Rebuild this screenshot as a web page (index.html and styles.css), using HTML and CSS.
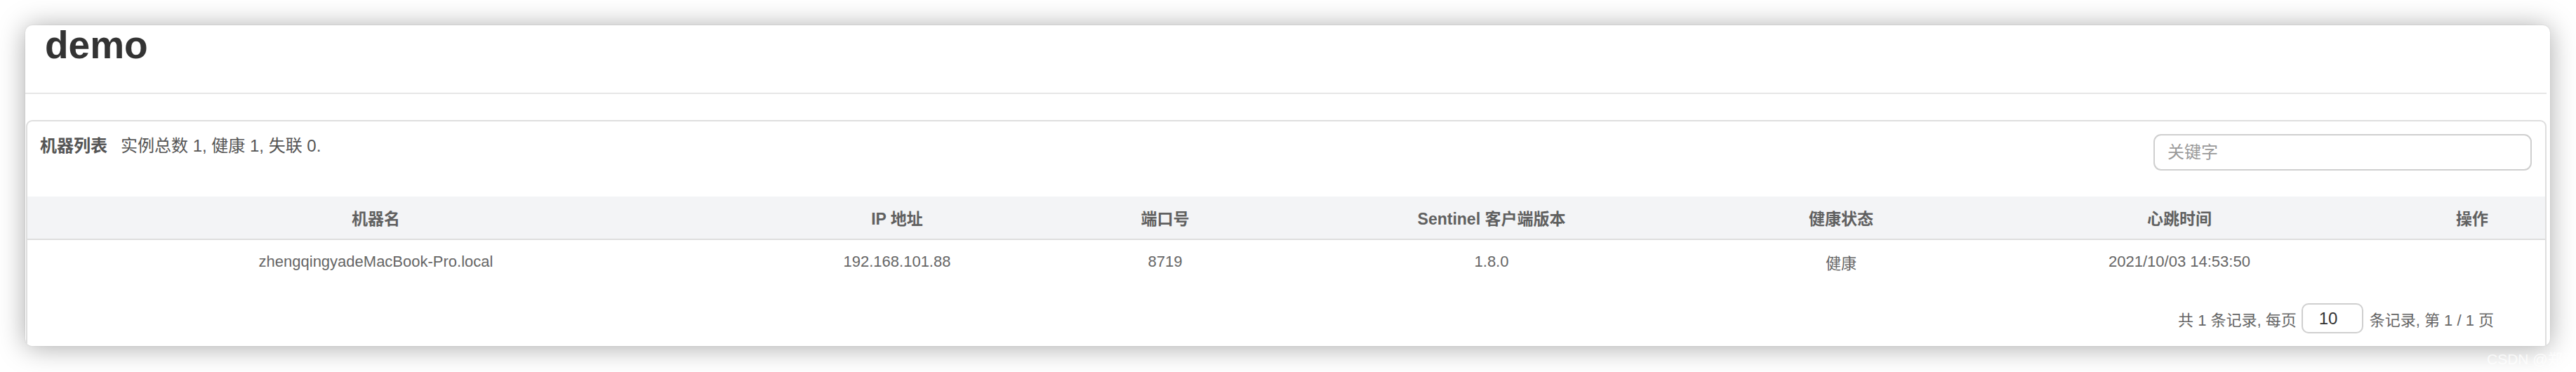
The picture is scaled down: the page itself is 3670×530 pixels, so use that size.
FILE: index.html
```html
<!DOCTYPE html>
<html lang="zh-CN">
<head>
<meta charset="utf-8">
<title>demo</title>
<link rel="stylesheet" href="styles.css">
</head>
<body>
<div class="window">
  <div class="page-header"><h1 class="page-title">demo</h1></div>
  <div class="window-body">
    <div class="panel">
      <div class="panel-top">
        <div class="panel-title">
          <span class="panel-label">机器列表</span>
          <span class="panel-stats">实例总数 1, 健康 1, 失联 0.</span>
        </div>
        <input class="search" type="text" placeholder="关键字">
      </div>
      <table class="machines">
        <colgroup>
          <col class="col-host"><col class="col-ip"><col class="col-port"><col class="col-ver"><col class="col-health"><col class="col-beat"><col class="col-op">
        </colgroup>
        <thead>
          <tr><th>机器名</th><th>IP 地址</th><th>端口号</th><th>Sentinel 客户端版本</th><th>健康状态</th><th>心跳时间</th><th>操作</th></tr>
        </thead>
        <tbody>
          <tr><td>zhengqingyadeMacBook-Pro.local</td><td>192.168.101.88</td><td>8719</td><td>1.8.0</td><td>健康</td><td>2021/10/03 14:53:50</td><td></td></tr>
        </tbody>
      </table>
      <div class="pager">
        <span class="pager-text">共 1 条记录, 每页</span>
        <input class="pager-size" type="text" value="10">
        <span class="pager-text">条记录, 第 1 / 1 页</span>
      </div>
    </div>
  </div>
</div>
<div class="watermark">CSDN @郑清</div>
</body>
</html>
```
FILE: styles.css
```css
html, body {
  margin: 0;
  padding: 0;
  background: #ffffff;
  overflow: hidden;
  width: 3670px;
  height: 530px;
}
body {
  position: relative;
  font-family: "Liberation Sans", "Noto Sans CJK SC", sans-serif;
  color: #666;
}
.window {
  margin: 36px 0 0 36px;
  width: 3597px;
  height: 457px;
  background: #fff;
  border-radius: 10px;
  box-shadow: 0 2px 38px rgba(0, 0, 0, 0.34), 0 0 2px rgba(0, 0, 0, 0.12);
}
.page-header {
  height: 96px;
  margin-right: 5px;
  border-bottom: 2px solid #e6e6e6;
}
.page-title {
  margin: 0;
  padding: 1px 0 0 28px;
  font-size: 55px;
  line-height: 55px;
  font-weight: 700;
  color: #333;
}
.window-body {
  height: 359px;
  overflow: hidden;
  border-radius: 0 0 10px 10px;
}
.panel {
  margin: 37px 0 0 1px;
  width: 3587px;
  height: 330px;
  border: 2px solid #dedede;
  border-radius: 9px 9px 0 0;
  background: #fff;
}
.panel-top {
  display: flex;
  justify-content: space-between;
  align-items: flex-start;
  padding: 18px 19px 0 18px;
  margin-bottom: 37px;
}
.panel-title {
  display: flex;
  align-items: center;
  font-size: 24px;
  line-height: 34px;
  color: #555;
}
.panel-label {
  font-weight: 700;
}
.panel-stats {
  margin-left: 19px;
}
.search {
  box-sizing: border-box;
  width: 539px;
  height: 52px;
  border: 2px solid #cfcfcf;
  border-radius: 11px;
  padding: 0 18px;
  font-family: "Liberation Sans", "Noto Sans CJK SC", sans-serif;
  font-size: 24px;
  color: #555;
  background: #fff;
  outline: none;
}
.search::placeholder {
  color: #9a9a9a;
}
.machines {
  width: 3587px;
  table-layout: fixed;
  border-collapse: collapse;
  border-spacing: 0;
}
.col-host { width: 993px; }
.col-ip { width: 492px; }
.col-port { width: 272px; }
.col-ver { width: 658px; }
.col-health { width: 338px; }
.col-beat { width: 626px; }
.col-op { width: 208px; }
.machines th {
  height: 60px;
  padding: 0;
  background: #f3f4f6;
  border-bottom: 2px solid #dddddd;
  font-size: 23px;
  font-weight: 700;
  color: #606060;
  text-align: center;
  vertical-align: middle;
}
.machines td {
  height: 62px;
  padding: 0;
  font-size: 22px;
  color: #666;
  text-align: center;
  vertical-align: middle;
}
.pager {
  display: flex;
  justify-content: flex-end;
  align-items: center;
  margin-top: 28px;
  padding-right: 73px;
  font-size: 22px;
  color: #666;
}
.pager-size {
  box-sizing: border-box;
  width: 88px;
  height: 43px;
  margin: 0 9px 0 7px;
  padding: 0 0 0 23px;
  border: 2px solid #cfcfcf;
  border-radius: 10px;
  font-family: "Liberation Sans", "Noto Sans CJK SC", sans-serif;
  font-size: 24px;
  color: #333;
  background: #fff;
  outline: none;
}
.watermark {
  position: absolute;
  left: 3543px;
  top: 499px;
  font-size: 21px;
  line-height: 26px;
  color: rgba(255, 255, 255, 0.75);
  white-space: nowrap;
}
```
